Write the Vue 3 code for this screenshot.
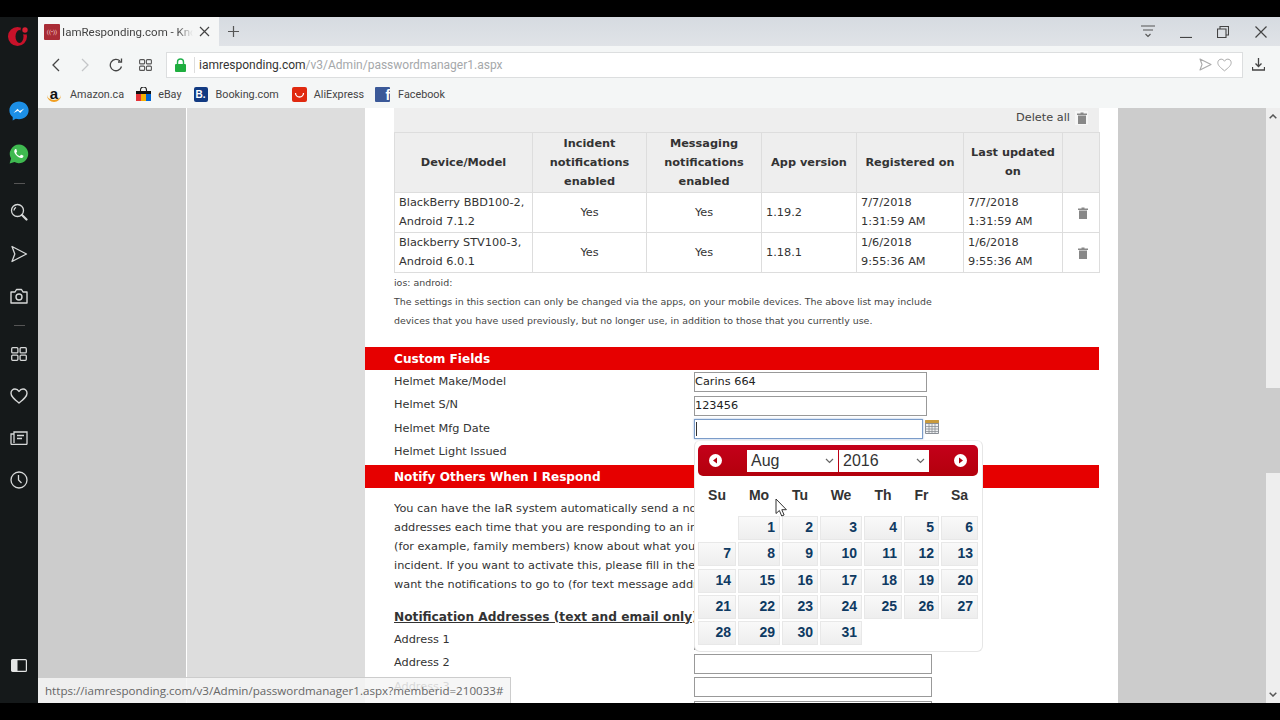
<script setup>
//table rows
const devices = [
  { model: "BlackBerry BBD100-2,\nAndroid 7.1.2", inc: "Yes", msg: "Yes", ver: "1.19.2", reg: "7/7/2018\n1:31:59 AM", upd: "7/7/2018\n1:31:59 AM" },
  { model: "Blackberry STV100-3,\nAndroid 6.0.1", inc: "Yes", msg: "Yes", ver: "1.18.1", reg: "1/6/2018\n9:55:36 AM", upd: "1/6/2018\n9:55:36 AM" },
];

//calendar
const dayNames = ["Su", "Mo", "Tu", "We", "Th", "Fr", "Sa"];
const days = [];
for (let i = 1; i <= 31; i++) days.push(i);
</script>

<template>
  <div class="screen">
    <div class="browser">
      <aside class="sidebar">
        <div class="side-logo">
          <svg width="22" height="22" viewBox="0 0 22 22"><path fill-rule="evenodd" d="M9.500 2a9.500 9.500 0 1 0 0 19 9.500 9.500 0 0 0 0-19zM11.500 5a4 6.500 0 1 1 0 13 4 6.500 0 0 1 0-13z" fill="#c8122a"/><circle cx="17" cy="5" r="4.500" fill="#15191a"/><circle cx="17" cy="5" r="2.700" fill="#d81f33"/></svg>
        </div>
        <div class="side-item">
          <svg width="20" height="20" viewBox="0 0 20 20"><path d="M10 .5C4.600.5.400 4.400.400 9.400c0 2.800 1.300 5 3.300 6.600v3.500l3.100-1.700c1 .3 2.100.4 3.200.4 5.400 0 9.600-3.900 9.600-8.800S15.400.5 10 .5z" fill="#1c8fe6"/><path d="M4.500 12l4-4.300 2.200 2.200 4.600-2.300-4.100 4.400-2.200-2.200z" fill="#fff"/></svg>
        </div>
        <div class="side-item side-wa">
          <svg width="20" height="20" viewBox="0 0 20 20"><path d="M10.100.6a9.300 9.300 0 0 0-8 14L.6 19.400l4.900-1.300A9.300 9.300 0 1 0 10.100.6z" fill="#3fb950"/><path d="M6.800 5c-.4 0-1 .3-1.300 1-.7 1.500 0 3.300 1.500 5 1.700 1.900 3.700 3 5.400 3 1 0 1.900-.9 2-1.600.1-.4 0-.6-.3-.8l-1.700-.8c-.3-.1-.5 0-.7.200l-.7.900c-.2.200-.4.200-.6.100-1.300-.6-2.400-1.500-3.100-2.800-.1-.2-.1-.4.100-.6l.5-.6c.2-.2.200-.4.100-.6L7.500 5.400C7.300 5.100 7.100 5 6.800 5z" fill="#fff"/></svg>
        </div>
        <div class="side-div"></div>
        <div class="side-item">
          <svg width="18" height="18" viewBox="0 0 18 18" fill="none" stroke="#d6d8d8" stroke-width="1.300"><circle cx="7.500" cy="7.500" r="6"/><path d="M12 12l4.500 4.500" stroke-width="2.200" stroke-linecap="round"/><path d="M4 7.500a3.500 3.500 0 0 1 2-3.200"/></svg>
        </div>
        <div class="side-item">
          <svg width="18" height="18" viewBox="0 0 18 18" fill="none" stroke="#d6d8d8" stroke-width="1.300" stroke-linejoin="round"><path d="M2 1.500L16.500 9 2 16.500 4.800 9z"/></svg>
        </div>
        <div class="side-item">
          <svg width="18" height="16" viewBox="0 0 18 16" fill="none" stroke="#d6d8d8" stroke-width="1.400"><path d="M1 4h4l1.500-2.500h5L13 4h4v11H1z" stroke-linejoin="round"/><circle cx="9" cy="9" r="3"/></svg>
        </div>
        <div class="side-div"></div>
        <div class="side-item">
          <svg width="16" height="14" viewBox="0 0 16 14" fill="none" stroke="#d6d8d8" stroke-width="1.300"><rect x=".7" y=".7" width="6.200" height="5.200" rx="1"/><rect x="9.100" y=".7" width="6.200" height="5.200" rx="1"/><rect x=".7" y="8.100" width="6.200" height="5.200" rx="1"/><rect x="9.100" y="8.100" width="6.200" height="5.200" rx="1"/></svg>
        </div>
        <div class="side-item">
          <svg width="18" height="16" viewBox="0 0 18 16" fill="none" stroke="#d6d8d8" stroke-width="1.400"><path d="M9 15C4 11 1 8.500 1 5.200 1 2.800 2.800 1 5 1c1.700 0 3.100.9 4 2.500C9.900 1.900 11.300 1 13 1c2.200 0 4 1.800 4 4.200C17 8.500 14 11 9 15z" stroke-linejoin="round"/></svg>
        </div>
        <div class="side-item">
          <svg width="18" height="14" viewBox="0 0 18 14" fill="none" stroke="#d6d8d8" stroke-width="1.300"><path d="M4 3V1h13v11.500a1 1 0 0 1-1 1H2a1 1 0 0 1-1-1V3h3v9"/><path d="M7 4.500h7M7 7.500h5"/></svg>
        </div>
        <div class="side-item">
          <svg width="18" height="18" viewBox="0 0 18 18" fill="none" stroke="#d6d8d8" stroke-width="1.300"><circle cx="9" cy="9" r="8"/><path d="M8.500 4v5l3 3"/></svg>
        </div>
        <div class="side-toggle">
          <svg width="16" height="13" viewBox="0 0 16 13"><rect x=".6" y=".6" width="14.800" height="11.800" rx="1" fill="none" stroke="#e2e4e4" stroke-width="1.200"/><rect x="1" y="1" width="5.500" height="11" fill="#e2e4e4"/></svg>
        </div>
      </aside>

      <div class="main">
        <div class="tabbar">
          <div class="tab">
            <span class="favicon"><span class="favicon-mark">((•))</span></span>
            <span class="tab-title">IamResponding.com - Knowledge</span>
            <svg class="tab-close" width="11" height="11" viewBox="0 0 11 11" stroke="#444" stroke-width="1.200"><path d="M1 1l9 9M10 1l-9 9"/></svg>
          </div>
          <svg class="tab-plus" width="11" height="11" viewBox="0 0 11 11" stroke="#555" stroke-width="1.200"><path d="M5.500 0v11M0 5.500h11"/></svg>
          <div class="win-btns">
            <svg class="win-menu" width="14" height="13" viewBox="0 0 14 13" fill="none" stroke="#555" stroke-width="1.100"><path d="M0 1h14M2 5h10M4.500 9l2.500 2.500L9.500 9"/></svg>
            <svg class="win-min" width="12" height="12" viewBox="0 0 12 12" stroke="#444" stroke-width="1.200"><path d="M0 11.500h12"/></svg>
            <svg class="win-max" width="12" height="12" viewBox="0 0 12 12" fill="none" stroke="#444" stroke-width="1.100"><path d="M.5 3h8.500v8.500H.5zM3 3V.5h8.500V9H9"/></svg>
            <svg class="win-x" width="12" height="12" viewBox="0 0 12 12" stroke="#444" stroke-width="1.200"><path d="M.5.500l11 11M11.500.500l-11 11"/></svg>
          </div>
        </div>

        <div class="navbar">
          <svg class="nav-back" width="8" height="14" viewBox="0 0 8 14" fill="none" stroke="#444" stroke-width="1.300"><path d="M7 1L1 7l6 6"/></svg>
          <svg class="nav-fwd" width="8" height="14" viewBox="0 0 8 14" fill="none" stroke="#c4c6c8" stroke-width="1.300"><path d="M1 1l6 6-6 6"/></svg>
          <svg class="nav-reload" width="14" height="14" viewBox="0 0 14 14" fill="none" stroke="#444" stroke-width="1.300"><path d="M12.500 8.500A5.700 5.700 0 1 1 11 3"/><path d="M12.500 .5v3.500H9" /></svg>
          <svg class="nav-grid" width="13" height="12" viewBox="0 0 13 12" fill="none" stroke="#555" stroke-width="1.100"><rect x=".6" y=".6" width="5" height="4.300" rx="1"/><rect x="7.400" y=".6" width="5" height="4.300" rx="1"/><rect x=".6" y="7.100" width="5" height="4.300" rx="1"/><rect x="7.400" y="7.100" width="5" height="4.300" rx="1"/></svg>
          <div class="urlbox">
            <svg class="lock" width="11" height="14" viewBox="0 0 11 14"><path d="M2.500 6V4a3 3 0 0 1 6 0v2" fill="none" stroke="#22b14c" stroke-width="1.400"/><rect x="0" y="6" width="11" height="8" rx="1" fill="#1fae3f"/></svg>
            <span class="url-sep"></span>
            <span class="url-host">iamresponding.com</span><span class="url-path">/v3/Admin/passwordmanager1.aspx</span>
            <svg class="url-send" width="13" height="13" viewBox="0 0 13 13" fill="none" stroke="#aaa" stroke-width="1.100" stroke-linejoin="round"><path d="M1 1l11 5.500L1 12l2-5.500z"/></svg>
            <svg class="url-heart" width="15" height="14" viewBox="0 0 18 16" fill="none" stroke="#aaa" stroke-width="1.200"><path d="M9 15C4 11 1 8.500 1 5.200 1 2.800 2.800 1 5 1c1.700 0 3.100.9 4 2.500C9.900 1.900 11.300 1 13 1c2.200 0 4 1.800 4 4.200C17 8.500 14 11 9 15z"/></svg>
          </div>
          <svg class="nav-dl" width="13" height="13" viewBox="0 0 13 13" fill="none" stroke="#444" stroke-width="1.300"><path d="M6.500 0v8M3.500 5.500l3 3 3-3M.5 9v3h12V9"/></svg>
        </div>

        <div class="bookmarks">
          <div class="bm bm-amazon"><span class="bm-a">a</span>Amazon.ca</div>
          <div class="bm bm-ebay">
            <svg width="15" height="15" viewBox="0 0 15 15"><path d="M4.500 5V3a3 3 0 0 1 6 0v2" fill="none" stroke="#222" stroke-width="1.100"/><rect y="4" width="15" height="3" fill="#111"/><rect y="7" x="0" width="5" height="7" fill="#e53238"/><rect y="7" x="5" width="5" height="7" fill="#f5af02"/><rect y="7" x="10" width="5" height="7" fill="#0064d2"/></svg>
            eBay
          </div>
          <div class="bm bm-booking"><span class="bm-b">B.</span>Booking.com</div>
          <div class="bm bm-ali">
            <svg width="15" height="15" viewBox="0 0 15 15"><rect width="15" height="15" rx="2" fill="#e0290f"/><path d="M3.500 6a4 4 0 0 0 8 0" fill="none" stroke="#fff" stroke-width="1.300"/></svg>
            AliExpress
          </div>
          <div class="bm bm-fb"><span class="bm-f">f</span>Facebook</div>
        </div>

        <div class="page">
          <div class="page-left"></div>
          <div class="page-mid"></div>
          <div class="content">
            <div class="delete-row">
              Delete all
              <span class="trash-bg">
                <svg width="10" height="12" viewBox="0 0 10 12" fill="#888"><path d="M0 1.500h3.500V.5h3v1H10V3H0zM1 3.500h8V12H1z"/></svg>
              </span>
            </div>
            <table class="devices">
              <thead>
                <tr>
                  <th class="c1">Device/Model</th>
                  <th class="c2">Incident notifications enabled</th>
                  <th class="c3">Messaging notifications enabled</th>
                  <th class="c4">App version</th>
                  <th class="c5">Registered on</th>
                  <th class="c6">Last updated on</th>
                  <th class="c7"></th>
                </tr>
              </thead>
              <tbody>
                <tr v-for="d in devices" :key="d.model">
                  <td class="lines">{{ d.model }}</td>
                  <td class="center">{{ d.inc }}</td>
                  <td class="center">{{ d.msg }}</td>
                  <td>{{ d.ver }}</td>
                  <td class="lines">{{ d.reg }}</td>
                  <td class="lines">{{ d.upd }}</td>
                  <td class="center trash">
                    <svg width="10" height="12" viewBox="0 0 10 12" fill="#888"><path d="M0 1.500h3.500V.5h3v1H10V3H0zM1 3.500h8V12H1z"/></svg>
                  </td>
                </tr>
              </tbody>
            </table>
            <p class="small">ios: android:</p>
            <p class="small">The settings in this section can only be changed via the apps, on your mobile devices. The above list may include</p>
            <p class="small">devices that you have used previously, but no longer use, in addition to those that you currently use.</p>

            <h3 class="redbar custom">Custom Fields</h3>
            <div class="field">
              <label>Helmet Make/Model</label>
              <div class="inp">Carins 664</div>
            </div>
            <div class="field">
              <label>Helmet S/N</label>
              <div class="inp">123456</div>
            </div>
            <div class="field">
              <label>Helmet Mfg Date</label>
              <div class="inp focus"><span class="caret"></span></div>
              <svg class="cal-icon" width="14" height="14" viewBox="0 0 14 14"><rect width="14" height="14" rx="1" fill="#8a8f96"/><rect y="0" width="14" height="3" rx="1" fill="#c99a3c"/><path d="M1 4h12v9H1z" fill="#eef0f2"/><path d="M1 6.500h12M1 9h12M1 11.500h12M4 4v9M7 4v9M10 4v9" stroke="#8a8f96" stroke-width=".8"/></svg>
            </div>
            <div class="field">
              <label>Helmet Light Issued</label>
            </div>

            <h3 class="redbar notify">Notify Others When I Respond</h3>
            <p class="para">
              You can have the IaR system automatically send a notification to one or more<br />
              addresses each time that you are responding to an incident. This lets other people<br />
              (for example, family members) know about what you are doing when you respond<br />
              incident. If you want to activate this, please fill in the addresses below where you<br />
              want the notifications to go to (for text message addresses, use the carrier gateway)
            </p>
            <h4 class="addr-title">Notification Addresses (text and email only)</h4>
            <div class="field addr addr-first">
              <label>Address 1</label>
              <div class="inp wide"></div>
            </div>
            <div class="field addr">
              <label>Address 2</label>
              <div class="inp wide"></div>
            </div>
            <div class="field addr">
              <label>Address 3</label>
              <div class="inp wide"></div>
            </div>
            <div class="field addr">
              <label></label>
              <div class="inp wide"></div>
            </div>

            <div class="datepicker">
              <div class="dp-head">
                <span class="dp-arrow">
                  <svg width="13" height="13" viewBox="0 0 13 13"><circle cx="6.500" cy="6.500" r="6.500" fill="#fff"/><path d="M8 3.500v6L4 6.500z" fill="#b00010"/></svg>
                </span>
                <div class="dp-selects">
                  <div class="dp-select month">Aug<svg width="9" height="6" viewBox="0 0 9 6" fill="none" stroke="#666" stroke-width="1.200"><path d="M1 1l3.500 3.500L8 1"/></svg></div>
                  <div class="dp-select year">2016<svg width="9" height="6" viewBox="0 0 9 6" fill="none" stroke="#666" stroke-width="1.200"><path d="M1 1l3.500 3.500L8 1"/></svg></div>
                </div>
                <span class="dp-arrow">
                  <svg width="13" height="13" viewBox="0 0 13 13"><circle cx="6.500" cy="6.500" r="6.500" fill="#fff"/><path d="M5 3.500v6l4-3z" fill="#b00010"/></svg>
                </span>
              </div>
              <div class="dp-names">
                <span v-for="n in dayNames" :key="n">{{ n }}</span>
              </div>
              <div class="dp-days">
                <span class="dp-blank"></span>
                <span v-for="n in days" :key="n" class="dp-day">{{ n }}</span>
              </div>
            </div>
          </div>
          <div class="page-right"></div>
          <div class="scrollbar">
            <svg width="8" height="5" viewBox="0 0 8 5" fill="none" stroke="#555" stroke-width="1.500"><path d="M.7 4.300L4 1l3.300 3.300"/></svg>
            <div class="thumb"></div>
            <svg width="8" height="5" viewBox="0 0 8 5" fill="none" stroke="#555" stroke-width="1.500"><path d="M.7.700L4 4l3.300-3.300"/></svg>
          </div>

          <div class="status">https://iamresponding.com/v3/Admin/passwordmanager1.aspx?memberid=210033#</div>
          <svg class="cursor" width="13" height="20" viewBox="0 0 13 20"><path d="M1 1v14.500l3.400-3 2.300 5.500 2.400-1-2.300-5.300h4.600z" fill="#fff" stroke="#333" stroke-width="1"/></svg>
        </div>
      </div>
    </div>
  </div>
</template>

<style>
html,
body {
  margin: 0;
  background: #000;
}
</style>

<style scoped>
.screen {
  width: 1280px;
  height: 720px;
  background: #000;
  padding: 17px 0;
  box-sizing: border-box;
  overflow: hidden;
  font-family: Roboto, sans-serif;
}

.browser {
  display: flex;
  height: 686px;
}

/* opera sidebar */
.sidebar {
  width: 38px;
  flex: none;
  background: #15191a;
  display: flex;
  flex-direction: column;
  align-items: center;
}

.side-logo {
  height: 38px;
  margin-bottom: 35px;
  display: flex;
  align-items: center;
  justify-content: center;
}

.side-item {
  height: 42px;
  width: 100%;
  display: flex;
  align-items: center;
  justify-content: center;
}

.side-wa {
  margin-top: 1px;
}

.side-div {
  height: 16px;
  width: 11px;
  background: linear-gradient(#555, #555) center / 11px 1px no-repeat;
}

.side-toggle {
  margin-top: auto;
  height: 28px;
  margin-bottom: 24px;
  display: flex;
  align-items: center;
}

.main {
  flex: 1;
  min-width: 0;
  display: flex;
  flex-direction: column;
}

/* tab strip */
.tabbar {
  height: 29px;
  flex: none;
  display: flex;
  align-items: center;
  background: linear-gradient(#d6dbe1, #e0e3e7);
}

.tab {
  width: 181px;
  height: 29px;
  background: #f5f6f6;
  display: flex;
  align-items: center;
  padding-left: 6px;
  box-sizing: border-box;
}

.favicon {
  width: 16px;
  height: 16px;
  background: #a92c36;
  border-radius: 1px;
  display: flex;
  align-items: center;
  justify-content: center;
  flex: none;
}

.favicon-mark {
  font-size: 6px;
  color: #f3cfd2;
}

.tab-title {
  margin-left: 2px;
  width: 131px;
  font-size: 11.500px;
  color: #444;
  white-space: nowrap;
  overflow: hidden;
  -webkit-mask-image: linear-gradient(90deg, #000 88%, transparent);
  mask-image: linear-gradient(90deg, #000 88%, transparent);
}

.tab-close {
  margin-left: 6px;
}

.tab-plus {
  margin-left: 9px;
}

.win-btns {
  margin-left: auto;
  display: flex;
  align-items: center;
  margin-right: 13px;
}

.win-menu {
  margin-right: 25px;
}

.win-min {
  margin-right: 25px;
}

.win-max {
  margin-right: 26px;
}

/* address bar */
.navbar {
  height: 37px;
  flex: none;
  display: flex;
  align-items: center;
  background: #f4f6f6;
}

.nav-back {
  margin-left: 14px;
}

.nav-fwd {
  margin-left: 21px;
}

.nav-reload {
  margin-left: 20px;
}

.nav-grid {
  margin-left: 16px;
}

.urlbox {
  margin-left: 14px;
  width: 1077px;
  height: 26px;
  background: #fff;
  border: 1px solid #dcdedf;
  box-sizing: border-box;
  display: flex;
  align-items: center;
  font-size: 12px;
}

.lock {
  margin-left: 8px;
}

.url-sep {
  width: 1px;
  height: 16px;
  background: #ddd;
  margin: 0 4px 0 8px;
}

.url-host {
  color: #333;
}

.url-path {
  color: #a5a8aa;
}

.url-send {
  margin-left: auto;
}

.url-heart {
  margin: 0 10px 0 5px;
}

.nav-dl {
  margin-left: 9px;
}

/* bookmarks */
.bookmarks {
  height: 25px;
  flex: none;
  display: flex;
  align-items: center;
  background: #f4f6f6;
  font-size: 10.800px;
  color: #444;
  padding-bottom: 2px;
  box-sizing: border-box;
}

.bm {
  display: flex;
  align-items: center;
  gap: 5px;
  white-space: nowrap;
}

.bm-amazon {
  margin-left: 9px;
  gap: 9px;
}

.bm-a {
  width: 14px;
  font: bold 15px "Liberation Sans", sans-serif;
  color: #111;
  text-align: center;
  border-bottom: 2px solid #f19e1f;
  border-radius: 0 0 8px 8px;
  line-height: 12px;
}

.bm-ebay {
  margin-left: 12px;
  gap: 7px;
}

.bm-booking {
  margin-left: 12px;
  gap: 8px;
}

.bm-b {
  width: 14px;
  height: 15px;
  background: #123a82;
  color: #fff;
  font: bold 10px/15px "Liberation Sans", sans-serif;
  text-align: center;
  border-radius: 2px;
}

.bm-ali {
  margin-left: 13px;
  gap: 7px;
}

.bm-fb {
  margin-left: 11px;
  gap: 8px;
}

.bm-f {
  width: 15px;
  height: 15px;
  background: #3b5998;
  color: #fff;
  font: bold 14px/17px "Liberation Sans", sans-serif;
  text-align: right;
  padding-right: 0;
  border-radius: 1px;
  overflow: hidden;
}

/* page */
.page {
  position: relative;
  flex: 1;
  min-height: 0;
  display: flex;
  overflow: hidden;
  font-family: "DejaVu Sans", Verdana, sans-serif;
  font-size: 11.300px;
  color: #333;
}

.page-left {
  width: 148px;
  flex: none;
  background: #ccc;
  border-right: 1px solid #fff;
}

.page-mid {
  width: 178px;
  flex: none;
  background: #ddd;
}

.content {
  position: relative;
  width: 753px;
  flex: none;
  background: #fff;
  padding: 0 19px 0 29px;
  box-sizing: border-box;
  overflow: hidden;
}

.page-right {
  flex: 1;
  background: #ccc;
}

.scrollbar {
  width: 14px;
  flex: none;
  background: #eee;
  position: relative;
  display: flex;
  flex-direction: column;
  align-items: center;
  justify-content: space-between;
  padding: 6px 0;
  box-sizing: border-box;
}

.thumb {
  position: absolute;
  top: 280px;
  left: 0;
  width: 14px;
  height: 85px;
  background: #ccc;
}

.delete-row {
  height: 24px;
  background: #eee;
  display: flex;
  align-items: center;
  justify-content: flex-end;
  gap: 5px;
  padding: 0 11px 5px 0;
  color: #444;
  box-sizing: border-box;
}

.trash-bg {
  display: flex;
  width: 13px;
  height: 14px;
  background: #f6f6f6;
  align-items: center;
  justify-content: center;
}

.devices {
  width: 705px;
  table-layout: fixed;
  border-collapse: collapse;
  line-height: 19px;
}

.devices th,
.devices td {
  border: 1px solid #ddd;
  padding: 0 4px;
  box-sizing: border-box;
}

.devices th {
  background: #eee;
  height: 59.500px;
  font-weight: bold;
  text-align: center;
}

.devices td {
  height: 40px;
}

.devices .lines {
  white-space: pre-line;
}

.center {
  text-align: center;
}

.devices .trash {
  padding-left: 6px;
  padding-right: 3px;
}

.trash svg {
  display: block;
  margin: 1px auto 0;
}

.c1 { width: 138px; }
.c2 { width: 114px; }
.c3 { width: 115px; }
.c4 { width: 95px; }
.c5 { width: 107px; }
.c6 { width: 99px; }
.c7 { width: 37px; }

.small {
  margin: 0;
  font-size: 9.430px;
  line-height: 19px;
  color: #444;
  white-space: nowrap;
}

.redbar {
  margin: 0 0 0 -29px;
  padding-left: 29px;
  height: 23px;
  background: #e60000;
  color: #fff;
  font-size: 12.100px;
  font-weight: bold;
  line-height: 24px;
}

.custom {
  margin-top: 17px;
}

.notify {
  margin-top: 1px;
}

.field {
  height: 23.500px;
  display: flex;
  align-items: center;
}

.field label {
  width: 300px;
  flex: none;
}

.inp {
  width: 233px;
  height: 20px;
  margin-top: 2px;
  border: 1px solid #999;
  box-sizing: border-box;
  background: #fff;
  line-height: 18px;
  padding-left: 0;
  color: #222;
  flex: none;
}

.inp.focus {
  width: 229px;
  border-color: #7b9cc9;
  box-shadow: 0 0 2px #9db8dc;
  display: flex;
  align-items: center;
}

.caret {
  width: 1px;
  height: 14px;
  margin-left: 1px;
  background: #333;
}

.cal-icon {
  margin-left: 2px;
  margin-top: -3px;
}

.para {
  margin: 11px 0 0;
  width: 300px;
  overflow: hidden;
  line-height: 19px;
  white-space: nowrap;
}

.addr-title {
  margin: 14px 0 0;
  font-size: 12.200px;
  font-weight: bold;
  text-decoration: underline;
  line-height: 19px;
}

.addr-first {
  margin-top: 1px;
}

.wide {
  width: 238px;
}

/* date picker popup */
.datepicker {
  position: absolute;
  left: 329px;
  top: 332px;
  width: 289px;
  height: 212px;
  box-sizing: border-box;
  background: #fff;
  border: 1px solid #e6e6e6;
  border-top-color: #f0f0f0;
  border-radius: 6px;
  padding: 4px 4px 0 3px;
  font-family: "Liberation Sans", Arial, sans-serif;
}

.dp-head {
  height: 31px;
  background: linear-gradient(#c4001a, #b3000c);
  border-radius: 5px;
  display: flex;
  align-items: center;
  justify-content: space-between;
  padding: 0 11px;
}

.dp-arrow {
  display: flex;
}

.dp-selects {
  display: flex;
  gap: 1px;
}

.dp-select {
  height: 22px;
  background: #fff;
  color: #333;
  font-size: 16px;
  line-height: 22px;
  padding-left: 4px;
  box-sizing: border-box;
  display: flex;
  align-items: center;
  justify-content: space-between;
  padding-right: 4px;
}

.month {
  width: 91px;
}

.year {
  width: 90px;
}

.dp-names,
.dp-days {
  display: grid;
  grid-template-columns: 38px 42px 36px 42px 38px 35px 37px;
  column-gap: 2px;
}

.dp-names {
  height: 38px;
  margin-bottom: 2px;
  align-items: center;
  font-size: 14px;
  font-weight: bold;
  color: #333;
  text-align: center;
}

.dp-days {
  grid-auto-rows: 24px;
  row-gap: 2.250px;
}

.dp-blank {
  grid-column: 1;
}

.dp-day {
  background: linear-gradient(#f9f9f9, #eeeeee);
  border: 1px solid #e8e8e8;
  box-sizing: border-box;
  color: #0f3a62;
  font-size: 14px;
  font-weight: bold;
  text-align: right;
  line-height: 20px;
  padding-right: 4px;
}

/* link preview bubble */
.status {
  position: absolute;
  left: 0;
  bottom: 0;
  width: 473px;
  height: 26px;
  box-sizing: border-box;
  background: rgba(244, 244, 244, 0.85);
  border: 1px solid #ccc;
  border-width: 1px 1px 0 0;
  color: #666;
  font-family: "Open Sans", sans-serif;
  font-size: 11.600px;
  line-height: 25px;
  padding-left: 7px;
  white-space: nowrap;
}

.cursor {
  position: absolute;
  left: 737px;
  top: 390px;
}
</style>
